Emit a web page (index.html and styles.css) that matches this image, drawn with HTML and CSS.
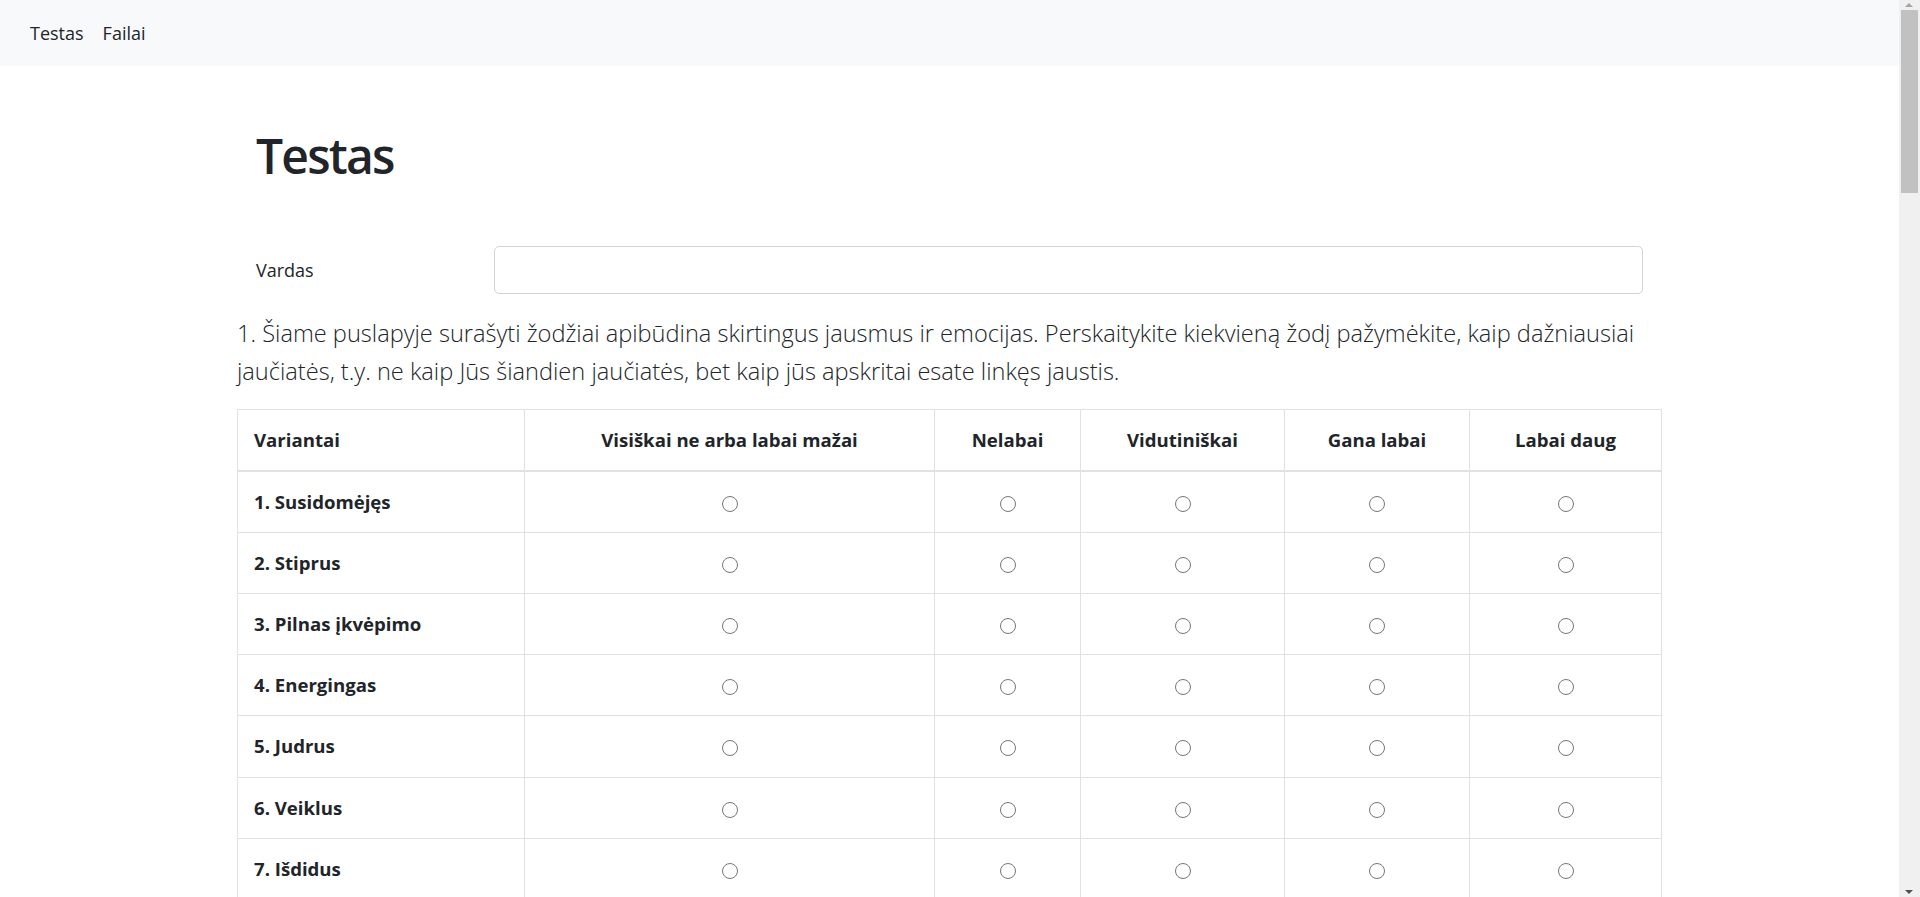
FILE: index.html
```html
<!DOCTYPE html>
<html lang="lt">
<head>
<meta charset="utf-8">
<title>Testas</title>
<link rel="stylesheet" href="styles.css">
</head>
<body>
<nav class="navbar">
  <a class="nav-link" href="#">Testas</a>
  <a class="nav-link" href="#">Failai</a>
</nav>
<main class="page">
  <h1 class="title">Testas</h1>
  <form class="form">
    <div class="form-row">
      <label class="form-label" for="vardas">Vardas</label>
      <div class="form-col"><input class="form-control" id="vardas" type="text"></div>
    </div>
    <p class="lead">1. Šiame puslapyje surašyti žodžiai apibūdina skirtingus jausmus ir emocijas. Perskaitykite kiekvieną žodį pažymėkite, kaip dažniausiai jaučiatės, t.y. ne kaip Jūs šiandien jaučiatės, bet kaip jūs apskritai esate linkęs jaustis.</p>
    <table class="table">
      <colgroup>
        <col class="c1"><col class="c2"><col class="c3"><col class="c4"><col class="c5"><col class="c6">
      </colgroup>
      <thead>
        <tr>
          <th class="left">Variantai</th>
          <th>Visiškai ne arba labai mažai</th>
          <th>Nelabai</th>
          <th>Vidutiniškai</th>
          <th>Gana labai</th>
          <th>Labai daug</th>
        </tr>
      </thead>
      <tbody>
        <tr><th class="left">1. Susidomėjęs</th><td><input type="radio" name="q1"></td><td><input type="radio" name="q1"></td><td><input type="radio" name="q1"></td><td><input type="radio" name="q1"></td><td><input type="radio" name="q1"></td></tr>
        <tr><th class="left">2. Stiprus</th><td><input type="radio" name="q2"></td><td><input type="radio" name="q2"></td><td><input type="radio" name="q2"></td><td><input type="radio" name="q2"></td><td><input type="radio" name="q2"></td></tr>
        <tr><th class="left">3. Pilnas įkvėpimo</th><td><input type="radio" name="q3"></td><td><input type="radio" name="q3"></td><td><input type="radio" name="q3"></td><td><input type="radio" name="q3"></td><td><input type="radio" name="q3"></td></tr>
        <tr><th class="left">4. Energingas</th><td><input type="radio" name="q4"></td><td><input type="radio" name="q4"></td><td><input type="radio" name="q4"></td><td><input type="radio" name="q4"></td><td><input type="radio" name="q4"></td></tr>
        <tr><th class="left">5. Judrus</th><td><input type="radio" name="q5"></td><td><input type="radio" name="q5"></td><td><input type="radio" name="q5"></td><td><input type="radio" name="q5"></td><td><input type="radio" name="q5"></td></tr>
        <tr><th class="left">6. Veiklus</th><td><input type="radio" name="q6"></td><td><input type="radio" name="q6"></td><td><input type="radio" name="q6"></td><td><input type="radio" name="q6"></td><td><input type="radio" name="q6"></td></tr>
        <tr><th class="left">7. Išdidus</th><td><input type="radio" name="q7"></td><td><input type="radio" name="q7"></td><td><input type="radio" name="q7"></td><td><input type="radio" name="q7"></td><td><input type="radio" name="q7"></td></tr>
      </tbody>
    </table>
  </form>
</main>
<div class="scrollbar" aria-hidden="true">
  <div class="sb-arrow sb-up"></div>
  <div class="sb-thumb"></div>
  <div class="sb-arrow sb-down"></div>
</div>
</body>
</html>
```
FILE: styles.css
```css
* { box-sizing: border-box; }
html, body { margin: 0; padding: 0; }
body {
  font-family: "Open Sans", "Noto Sans", sans-serif;
  font-size: 19px;
  line-height: 30px;
  color: #212529;
  background: #fff;
}
.navbar {
  height: 66px;
  background: #f8f9fa;
  display: flex;
  align-items: center;
  padding: 0 20px;
}
.nav-link {
  color: #212529;
  text-decoration: none;
  padding: 0 9px 0 10px;
  font-size: 18px;
}
.page {
  width: 1425px;
  margin-left: 237px;
  padding-top: 60px;
  min-height: 4170px;
}
.title {
  margin: 0 0 60px;
  padding: 0 19px;
  font-size: 48px;
  line-height: 60px;
  font-weight: 600;
  letter-spacing: -1.8px;
}
.form-row {
  display: grid;
  grid-template-columns: 237.5px 1fr;
  margin-bottom: 20px;
}
.form-label {
  padding: 9px 19px 0;
  font-size: 18px;
  line-height: 30px;
}
.form-col { padding: 0 19px; }
.form-control {
  display: block;
  width: 100%;
  height: 47.5px;
  border: 1px solid #ced4da;
  border-radius: 5px;
  background: #fff;
  font: inherit;
  padding: 7px 15px;
}
.lead {
  margin: 0 0 19px;
  font-size: 23.6px;
  font-weight: 300;
  line-height: 38px;
}
.table {
  width: 1424px;
  border-collapse: collapse;
  table-layout: fixed;
}
.c1 { width: 287px; }
.c2 { width: 410px; }
.c3 { width: 146px; }
.c4 { width: 204px; }
.c5 { width: 185px; }
.c6 { width: 192px; }
.table th, .table td {
  border: 1px solid #dee2e6;
  padding: 15px 16px;
  height: 61.25px;
  text-align: center;
  vertical-align: middle;
  font-size: 18.6px;
  line-height: 30px;
}
.table th { font-weight: 700; }
.table thead th {
  border-bottom: 2px solid #dee2e6;
  height: 61px;
}
.table .left { text-align: left; }
.table input[type="radio"] {
  width: 16px;
  height: 16px;
  margin: 0;
  vertical-align: middle;
}
.scrollbar {
  position: fixed;
  top: 0;
  right: 0;
  width: 21px;
  height: 100vh;
  background: #f0f0f0;
}
.sb-thumb {
  position: absolute;
  top: 10px;
  left: 2px;
  width: 17px;
  height: 183px;
  background: #c1c1c1;
}
.sb-arrow {
  position: absolute;
  left: 6px;
  width: 0;
  height: 0;
  border-left: 4.5px solid transparent;
  border-right: 4.5px solid transparent;
}
.sb-up {
  top: 3px;
  border-bottom: 4px solid #a3a3a3;
}
.sb-down {
  bottom: 3px;
  border-top: 4px solid #505050;
}
```
